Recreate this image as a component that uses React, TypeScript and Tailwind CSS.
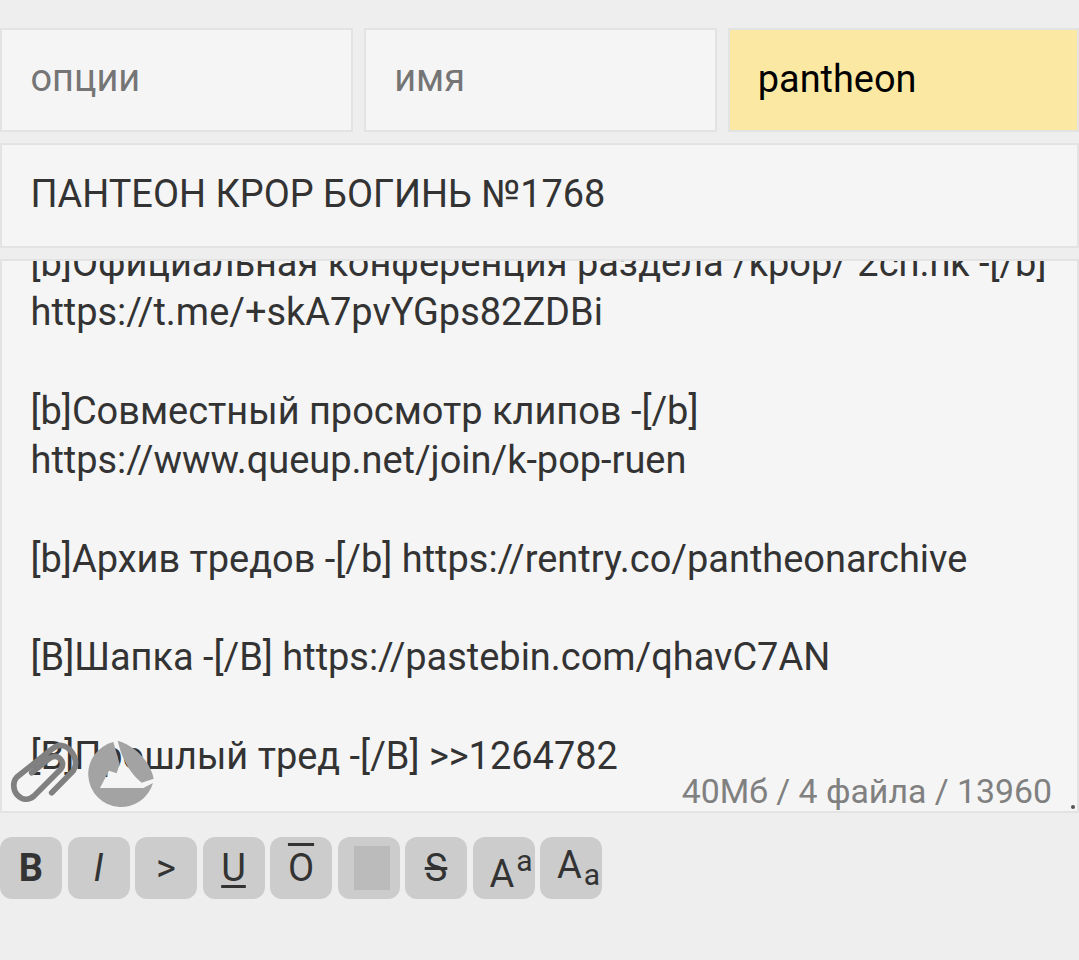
const fieldClass =
  "min-w-0 border-2 border-[#e3e3e3] bg-[#f5f5f5] pl-[28.5px] pb-[2px] flex items-center";

const lines = [
  "[b]Официальная конференция раздела /kpop/ 2ch.hk -[/b]",
  "https://t.me/+skA7pvYGps82ZDBi",
  "",
  "[b]Совместный просмотр клипов -[/b]",
  "https://www.queup.net/join/k-pop-ruen",
  "",
  "[b]Архив тредов -[/b] https://rentry.co/pantheonarchive",
  "",
  "[B]Шапка -[/B] https://pastebin.com/qhavC7AN",
  "",
  "[B]Прошлый тред -[/B] >>1264782",
];

const MarkupButton = ({ children, className = "justify-center" }: { children: React.ReactNode; className?: string }) => (
  <div className={"relative w-[62px] h-[62px] rounded-[12px] bg-[#cccccc] text-[#333333] text-[38px] leading-none flex items-center " + className}>
    {children}
  </div>
);

const App = () => {
  return (
    <div
      className="h-[960px] w-full overflow-hidden bg-[#eeeeee] pt-[28px] text-[37.9px] text-[#333333]"
      style={{ fontFamily: "Roboto, sans-serif" }}
    >
      <div className="grid grid-cols-[353px_352.25px_351px] gap-x-[11.25px] h-[104px]">
        <div className={fieldClass + " text-[#757575] pb-[4px]"}>опции</div>
        <div className="min-w-0 border-2 border-[#e3e3e3] bg-[#f5f5f5] pl-[28px] pb-[4px] flex items-center text-[#757575]">имя</div>
        <div className="min-w-0 border-2 border-[#e3e3e3] bg-[#fbe9a3] pl-[28px] pb-[2px] flex items-center text-black">
          pantheon
        </div>
      </div>
      <div className={fieldClass + " mt-[11px] h-[105px]"}>ПАНТЕОН КРОР БОГИНЬ №1768</div>
      <div className="relative mt-[11px] h-[554px] border-2 border-[#e3e3e3] bg-[#f5f5f5] overflow-hidden">
        <div className="-mt-[22px] pl-[28.5px] text-[37.95px] leading-[49.25px] whitespace-nowrap">
          {lines.map((line, i) => (
            <div key={i} className="h-[49.25px]">
              {line}
            </div>
          ))}
        </div>
        {/* attach icon */}
        <svg className="absolute left-[-2px] top-[469px] w-[85px] h-[85px]" viewBox="0 0 255 255" fill="none">
          <path
            d="M155 188 L220 122 C232 105 228 75 205 55 C188 42 170 45 155 58 L50 142 C38 155 38 180 52 195 C68 212 88 210 102 198 L182 118 C192 105 188 90 175 82 C165 76 155 80 145 88 L95 128"
            stroke="#808080"
            strokeWidth="17"
            strokeLinecap="round"
            strokeLinejoin="round"
          />
        </svg>
        {/* sticker icon */}
        <svg className="absolute left-[83px] top-[477px] w-[72px] h-[72px]" viewBox="0 0 216 216">
          <path
            d="M85 12 A99 99 0 1 0 204 135 L175 150 L45 150 L72 98 L95 106 L104 78 Z"
            fill="#a3a3a3"
          />
          <path d="M98 8 C150 22 195 70 206 122 L170 134 C140 110 112 70 98 8 Z" fill="#a3a3a3" />
        </svg>
        <div className="absolute right-[25px] bottom-[-1px] text-[33.8px] text-[#808080] leading-[40px]">
          40Мб / 4 файла / 13960
        </div>
        <div className="absolute right-[2px] bottom-[2px] w-[4px] h-[4px] rounded-full bg-[#555555]" />
      </div>
      <div className="mt-[24px] flex gap-x-[5.5px]">
        <MarkupButton>
          <span className="font-bold">B</span>
        </MarkupButton>
        <MarkupButton>
          <span className="italic">I</span>
        </MarkupButton>
        <MarkupButton>&gt;</MarkupButton>
        <MarkupButton>
          <span className="underline underline-offset-[4px]">U</span>
        </MarkupButton>
        <MarkupButton>
          <span className="overline">O</span>
        </MarkupButton>
        <MarkupButton className="justify-start">
          <div className="ml-[16px] w-[36px] h-[44px] bg-[#bbbbbb]" />
        </MarkupButton>
        <MarkupButton>
          <span className="line-through">S</span>
        </MarkupButton>
        <MarkupButton className="justify-start">
          <span className="ml-[17px] mt-[12px]">A</span>
          <span className="text-[30px] -mt-[14px] ml-[2px]">a</span>
        </MarkupButton>
        <MarkupButton className="justify-start">
          <span className="ml-[17px] -mt-[6px]">A</span>
          <span className="text-[30px] mt-[14px] ml-[2px]">a</span>
        </MarkupButton>
      </div>
    </div>
  );
};

export default App;
